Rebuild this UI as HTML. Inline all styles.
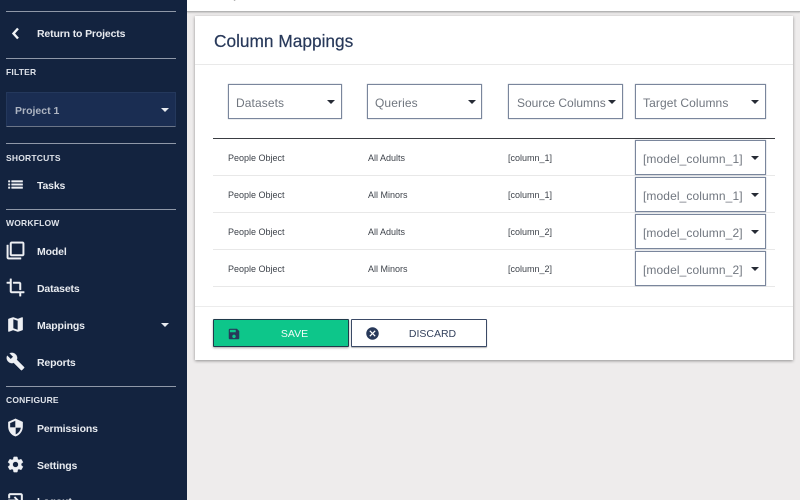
<!DOCTYPE html>
<html><head><meta charset="utf-8"><style>
html,body{margin:0;padding:0;width:800px;height:500px;overflow:hidden;background:#eeecec;font-family:"Liberation Sans",sans-serif}
*{box-sizing:border-box}
.a{position:absolute}
#side{left:0;top:0;width:187px;height:500px;background:#13233f;overflow:hidden}
.hr{position:absolute;left:6px;width:170px;height:1px;background:#8f98a8}
.lab{position:absolute;left:6px;font-size:8.5px;font-weight:bold;color:#dfe3ea;letter-spacing:.2px;line-height:10px}
.it{position:absolute;left:37px;font-size:10.5px;font-weight:bold;color:#e8ebf0;line-height:14px;letter-spacing:-.15px}
.ic{position:absolute;left:6px;width:19px;height:19px;fill:#eef0f4;stroke:#eef0f4;stroke-width:.5px}
.car{position:absolute;width:0;height:0;border-left:4px solid transparent;border-right:4px solid transparent;border-top:4px solid #262b35}
.car.w{border-left-width:4.5px;border-right-width:4.5px;border-top-color:#e8ebf0}
.box{position:absolute;background:#fff;border:1px solid #7a869c;box-shadow:0 0 1px #9aa3b3;font-size:12px;color:#70767f;letter-spacing:.1px;line-height:37px;padding-left:7px;white-space:nowrap}
.cell{position:absolute;font-size:9px;color:#3e434b;line-height:12px;white-space:nowrap}
.ln{position:absolute;left:213px;width:562px;height:1px;background:#e8e8e8}
</style></head><body>
<div class="a" style="left:187px;top:0;width:613px;height:12px;background:#fff;border-bottom:1px solid #b4b4b4;box-shadow:0 1px 1px #c8c8c8;overflow:hidden"><div class="a" style="left:30px;top:-11px;font-size:11px;color:#666;white-space:nowrap;word-spacing:6px">Project 1 &gt; Datasets &gt; All Datasets &gt; Columns</div></div>
<div class="a" id="side">
<div class="hr" style="top:11px"></div>
<svg class="ic" style="left:6px;top:24px;stroke:none" viewBox="0 0 19 19"><path d="M12 4.500 7.500 9.500 12 14.500" fill="none" stroke="#f2f4f7" stroke-width="2.400"/></svg>
<div class="it" style="top:27px">Return to Projects</div>
<div class="hr" style="top:58px"></div>
<div class="lab" style="top:67px">FILTER</div>
<div class="a" style="left:6px;top:92px;width:170px;height:35px;background:#1a2d52;border:1px solid #24385c;border-bottom:1px solid #6b7588"></div>
<div class="a" style="left:15px;top:104px;font-size:10.500px;font-weight:bold;color:#aeb5c2;line-height:14px">Project 1</div>
<div class="car w" style="left:161px;top:108px"></div>
<div class="hr" style="top:143px"></div>
<div class="lab" style="top:153px">SHORTCUTS</div>
<svg class="ic" style="top:175px" viewBox="0 0 24 24"><path d="M3 13h2v-2H3v2zm0 4h2v-2H3v2zm0-8h2V7H3v2zm4 4h14v-2H7v2zm0 4h14v-2H7v2zM7 7v2h14V7H7z"/></svg>
<div class="it" style="top:179px">Tasks</div>
<div class="hr" style="top:209px"></div>
<div class="lab" style="top:218px">WORKFLOW</div>
<svg class="ic" style="top:241px" viewBox="0 0 24 24"><path d="M3 5H1v16c0 1.100.9 2 2 2h16v-2H3V5zm18-4H7c-1.100 0-2 .9-2 2v14c0 1.100.9 2 2 2h14c1.100 0 2-.9 2-2V3c0-1.100-.9-2-2-2zm0 16H7V3h14v14z"/></svg>
<div class="it" style="top:245px">Model</div>
<svg class="ic" style="top:278px" viewBox="0 0 24 24"><path d="M17 15h2V7c0-1.100-.9-2-2-2H9v2h8v8zM7 17V1H5v4H1v2h4v10c0 1.100.9 2 2 2h10v4h2v-4h4v-2H7z"/></svg>
<div class="it" style="top:282px">Datasets</div>
<svg class="ic" style="top:315px" viewBox="0 0 24 24"><path d="M20.500 3l-.16.03L15 5.100 9 3 3.360 4.900c-.21.07-.36.25-.36.48V20.500c0 .28.22.5.5.5l.16-.03L9 18.900l6 2.100 5.640-1.900c.21-.07.36-.25.36-.48V3.500c0-.28-.22-.5-.5-.5zM15 19l-6-2.110V5l6 2.110V19z"/></svg>
<div class="it" style="top:319px">Mappings</div>
<div class="car w" style="left:161px;top:323px"></div>
<svg class="ic" style="top:352px" viewBox="0 0 24 24"><path d="M22.700 19l-9.100-9.100c.9-2.300.4-5-1.500-6.900-2-2-5-2.400-7.400-1.300L9 6 6 9 1.600 4.700C.4 7.100.9 10.100 2.900 12.100c1.900 1.900 4.600 2.400 6.900 1.500l9.100 9.100c.4.4 1 .4 1.400 0l2.300-2.300c.5-.4.5-1.100.1-1.400z"/></svg>
<div class="it" style="top:356px">Reports</div>
<div class="hr" style="top:386px"></div>
<div class="lab" style="top:395px">CONFIGURE</div>
<svg class="ic" style="top:418px" viewBox="0 0 24 24"><path d="M12 1L3 5v6c0 5.550 3.840 10.740 9 12 5.160-1.260 9-6.450 9-12V5l-9-4zm0 10.990h7c-.53 4.120-3.280 7.790-7 8.940V12H5V6.300l7-3.110v8.800z"/></svg>
<div class="it" style="top:422px">Permissions</div>
<svg class="ic" style="top:455px" viewBox="0 0 24 24"><path d="M19.140 12.940c.04-.3.06-.61.06-.94 0-.32-.02-.64-.07-.94l2.030-1.580c.18-.14.23-.41.12-.61l-1.920-3.320c-.12-.22-.37-.29-.59-.22l-2.390.96c-.5-.38-1.030-.7-1.620-.94l-.36-2.540c-.04-.24-.24-.41-.48-.41h-3.840c-.24 0-.43.17-.47.41l-.36 2.540c-.59.24-1.130.57-1.620.94l-2.390-.96c-.22-.08-.47 0-.59.22L2.740 8.870c-.12.21-.08.47.12.61l2.030 1.580c-.05.3-.09.63-.09.94s.02.64.07.94l-2.030 1.580c-.18.14-.23.41-.12.61l1.920 3.320c.12.22.37.29.59.22l2.390-.96c.5.38 1.030.7 1.620.94l.36 2.540c.05.24.24.41.48.41h3.840c.24 0 .44-.17.47-.41l.36-2.540c.59-.24 1.130-.56 1.620-.94l2.390.96c.22.08.47 0 .59-.22l1.920-3.320c.12-.22.07-.47-.12-.61l-2.010-1.580zM12 15.600c-1.980 0-3.600-1.620-3.600-3.600s1.620-3.600 3.600-3.600 3.600 1.620 3.600 3.600-1.620 3.600-3.600 3.600z"/></svg>
<div class="it" style="top:459px">Settings</div>
<svg class="ic" style="top:491px" viewBox="0 0 24 24"><path d="M10.090 15.590L11.500 17l5-5-5-5-1.410 1.410L12.670 11H3v2h9.670l-2.580 2.590zM19 3H5c-1.110 0-2 .9-2 2v4h2V5h14v14H5v-4H3v4c0 1.100.89 2 2 2h14c1.100 0 2-.9 2-2V5c0-1.100-.9-2-2-2z"/></svg>
<div class="it" style="top:495px">Logout</div>
</div>

<div class="a" style="left:195px;top:16px;width:598px;height:344px;background:#fff;box-shadow:0 1px 3px rgba(0,0,0,.4)"></div>
<div class="a" style="left:214px;top:31px;font-size:17.300px;font-weight:normal;color:#28395a;line-height:20px;-webkit-text-stroke:.2px #28395a;white-space:nowrap">Column Mappings</div>
<div class="a" style="left:195px;top:64px;width:598px;height:1px;background:#e9e9e9"></div>

<div class="box" style="left:228px;top:84px;width:114px;height:35px">Datasets</div><div class="car" style="left:327px;top:100px"></div>
<div class="box" style="left:367px;top:84px;width:115px;height:35px">Queries</div><div class="car" style="left:468px;top:100px"></div>
<div class="box" style="left:508px;top:84px;width:115px;height:35px;padding-left:8px;letter-spacing:0">Source Columns</div><div class="car" style="left:608px;top:100px"></div>
<div class="box" style="left:635px;top:84px;width:131px;height:35px">Target Columns</div><div class="car" style="left:751px;top:100px"></div>

<div class="a" style="left:213px;top:138px;width:562px;height:1px;background:#3a3d42"></div>
<div class="ln" style="top:175px"></div><div class="ln" style="top:212px"></div><div class="ln" style="top:249px"></div><div class="ln" style="top:286px"></div>

<div class="cell" style="left:228px;top:152px">People Object</div><div class="cell" style="left:368px;top:152px">All Adults</div><div class="cell" style="left:508px;top:152px">[column_1]</div>
<div class="cell" style="left:228px;top:189px">People Object</div><div class="cell" style="left:368px;top:189px">All Minors</div><div class="cell" style="left:508px;top:189px">[column_1]</div>
<div class="cell" style="left:228px;top:226px">People Object</div><div class="cell" style="left:368px;top:226px">All Adults</div><div class="cell" style="left:508px;top:226px">[column_2]</div>
<div class="cell" style="left:228px;top:263px">People Object</div><div class="cell" style="left:368px;top:263px">All Minors</div><div class="cell" style="left:508px;top:263px">[column_2]</div>

<div class="box" style="left:635px;top:140px;width:131px;height:35px">[model_column_1]</div><div class="car" style="left:751px;top:156px"></div>
<div class="box" style="left:635px;top:177px;width:131px;height:35px">[model_column_1]</div><div class="car" style="left:751px;top:193px"></div>
<div class="box" style="left:635px;top:214px;width:131px;height:35px">[model_column_2]</div><div class="car" style="left:751px;top:230px"></div>
<div class="box" style="left:635px;top:251px;width:131px;height:35px">[model_column_2]</div><div class="car" style="left:751px;top:267px"></div>

<div class="a" style="left:195px;top:306px;width:598px;height:1px;background:#ececec"></div>

<div class="a" style="left:213px;top:319px;width:136px;height:28px;background:#0dc68a;border:1px solid #1f3a4a;border-radius:1px;box-shadow:0 1px 2px rgba(0,0,0,.35)"></div>
<svg class="a" style="left:226.500px;top:326.500px;width:14px;height:14px;fill:#28395a" viewBox="0 0 24 24"><path d="M17 3H5c-1.110 0-2 .9-2 2v14c0 1.100.89 2 2 2h14c1.100 0 2-.9 2-2V7l-4-4zm-5 16c-1.660 0-3-1.340-3-3s1.340-3 3-3 3 1.340 3 3-1.340 3-3 3zm3-10H5V5h10v4z"/></svg>
<div class="a" style="left:213px;top:327px;width:163px;text-align:center;font-size:10.500px;color:#f2fbf8;line-height:14px">SAVE</div>
<div class="a" style="left:351px;top:319px;width:136px;height:28px;background:#fff;border:1px solid #3b4a66;border-radius:1px;box-shadow:0 1px 1px rgba(0,0,0,.3)"></div>
<svg class="a" style="left:365px;top:326px;width:15px;height:15px;fill:#28395a" viewBox="0 0 24 24"><path d="M12 2C6.470 2 2 6.470 2 12s4.470 10 10 10 10-4.470 10-10S17.530 2 12 2zm5 13.590L15.590 17 12 13.410 8.410 17 7 15.590 10.590 12 7 8.410 8.410 7 12 10.590 15.590 7 17 8.410 13.410 12 17 15.590z"/></svg>
<div class="a" style="left:351px;top:327px;width:163px;text-align:center;font-size:10.500px;color:#33415c;line-height:14px">DISCARD</div>
</body></html>
